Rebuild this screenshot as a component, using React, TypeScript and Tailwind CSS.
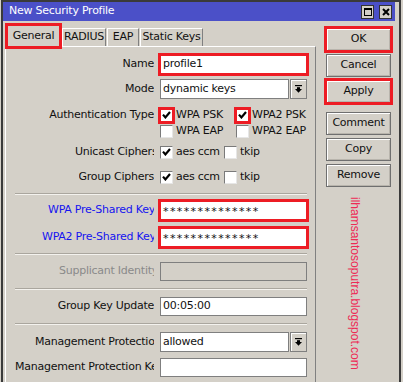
import React from 'react';

const redBox = 'outline-[3px] outline-[#ed1c24] -outline-offset-1';

function Check({ checked, red }: { checked?: boolean; red?: boolean }) {
  return (
    <span
      className={`flex h-[13px] w-[13px] shrink-0 items-center justify-center border border-t-[#7a7a7a] border-l-[#7a7a7a] border-r-[#e6e6e6] border-b-[#e6e6e6] bg-white ${red ? redBox : ''}`}
    >
      {checked && (
        <svg width="9" height="8" viewBox="0 0 9 8">
          <path d="M1 3.6 L3.4 6.4 L8 1" stroke="#000" strokeWidth="2.2" fill="none" />
        </svg>
      )}
    </span>
  );
}

function Option({ label, checked, red, w }: { label: string; checked?: boolean; red?: boolean; w: string }) {
  return (
    <div className={`flex items-center ${w}`}>
      <Check checked={checked} red={red} />
      <span className="ml-[3px] whitespace-nowrap">{label}</span>
    </div>
  );
}

function Row({
  label,
  clip = '',
  tone = 'text-[#111]',
  className,
  children,
}: {
  label: string;
  clip?: string;
  tone?: string;
  className: string;
  children: React.ReactNode;
}) {
  return (
    <div className={`flex items-center ${className}`}>
      <div className="ml-[9px] flex w-[140px] justify-end pr-[1px]">
        <span className={`block overflow-hidden whitespace-nowrap ${clip} ${tone}`}>{label}</span>
      </div>
      <div className="ml-[5px] flex items-center">{children}</div>
    </div>
  );
}

function Input({ value, red, disabled, stars }: { value?: string; red?: boolean; disabled?: boolean; stars?: boolean }) {
  return (
    <div
      className={`flex h-[19px] w-[147px] items-center overflow-hidden border border-[#7f7f7f] px-[2px] ${disabled ? 'bg-[#d4d0c8]' : 'bg-white'} ${red ? redBox : ''} ${stars ? 'pt-[3px] tracking-[1.4px]' : ''}`}
    >
      {value}
    </div>
  );
}

function Select({ value }: { value: string }) {
  return (
    <div className="flex h-[20px] items-center">
      <div className="flex h-[20px] w-[129px] items-center border border-[#7f7f7f] bg-white px-[2px]">{value}</div>
      <div className="ml-[1px] flex h-[20px] w-[17px] items-center justify-center border border-[#7f7f7f] bg-[#d4d0c8] shadow-[inset_1px_1px_0_#fff]">
        <svg width="7" height="8" viewBox="0 0 7 8">
          <rect x="0" y="0" width="7" height="1.2" fill="#000" />
          <rect x="2" y="2.2" width="3" height="2" fill="#000" />
          <polygon points="0,4 7,4 3.5,7.8" fill="#000" />
        </svg>
      </div>
    </div>
  );
}

function Sep({ className }: { className: string }) {
  return <div className={`ml-[9px] h-[2px] w-[292px] border-t border-b border-t-[#aaa69e] border-b-[#f4f2ee] ${className}`} />;
}

function Btn({ label, red, className = '' }: { label: string; red?: boolean; className?: string }) {
  return (
    <div
      className={`flex h-[23px] w-[65px] items-center justify-center border border-[#6f6f6f] bg-[#d4d0c8] text-[#111] shadow-[inset_1px_1px_0_#fff,inset_-1px_-1px_0_#b8b4ac] ${red ? redBox : ''} ${className}`}
    >
      {label}
    </div>
  );
}

export default function App() {
  return (
    <div className="flex h-[382px] w-[403px] overflow-hidden bg-[#d4d0c8] font-['DejaVu_Sans',sans-serif] text-[11px] tracking-[-0.25px] text-[#111]">
      <div className="ml-[1px] flex h-[400px] w-[400px] flex-col border-t-2 border-l-2 border-r-2 border-[#3a3a3a]">
        {/* title bar */}
        <div className="mr-[4px] flex h-[19px] items-center bg-[#4b50c8] pl-[6px] text-white">
          <span>New Security Profile</span>
          <div className="ml-auto flex gap-[5px] pr-[3px]">
            <div className="flex h-[14px] w-[13px] items-center justify-center border border-[#333] bg-[#d4d0c8]">
              <div className="h-[8px] w-[8px] border border-t-2 border-[#000]" />
            </div>
            <div className="flex h-[14px] w-[13px] items-center justify-center border border-[#333] bg-[#d4d0c8]">
              <svg width="8" height="8" viewBox="0 0 8 8">
                <path d="M1 1 L7 7 M7 1 L1 7" stroke="#000" strokeWidth="2" />
              </svg>
            </div>
          </div>
        </div>

        {/* body */}
        <div className="flex flex-1">
          <div className="ml-[2px] flex w-[311px] flex-col">
            {/* tabs */}
            <div className="flex h-[25px] items-end">
              <div className={`relative z-10 -mb-[1px] ml-[2px] flex h-[22px] w-[53px] items-center justify-center border-t border-l border-r border-t-white border-l-white border-r-[#808080] bg-[#d4d0c8] ${redBox}`}>
                General
              </div>
              <div className="ml-[2px] flex h-[18px] w-[44px] items-center justify-center border-t border-l border-r border-t-white border-l-white border-r-[#808080]">
                RADIUS
              </div>
              <div className="ml-[1px] flex h-[18px] w-[32px] items-center justify-center border-t border-l border-r border-t-white border-l-white border-r-[#808080]">
                EAP
              </div>
              <div className="ml-[1px] flex h-[18px] w-[63px] items-center justify-center border-t border-l border-r border-t-white border-l-white border-r-[#808080]">
                Static Keys
              </div>
            </div>

            {/* panel */}
            <div className="flex flex-1 flex-col border-t border-l border-r border-t-white border-l-white border-r-[#808080]">
              <Row label="Name" className="mt-[7px] h-[21px]">
                <Input value="profile1" red />
              </Row>
              <Row label="Mode" className="mt-[4px] h-[20px]">
                <Select value="dynamic keys" />
              </Row>
              <Row label="Authentication Type" className="mt-[8px] h-[16px]">
                <Option label="WPA PSK" checked red w="w-[76px]" />
                <Option label="WPA2 PSK" checked red w="w-[76px]" />
              </Row>
              <Row label="" className="h-[16px]">
                <Option label="WPA EAP" w="w-[76px]" />
                <Option label="WPA2 EAP" w="w-[76px]" />
              </Row>
              <Row label="Unicast Ciphers" clip="max-w-[79px]" className="mt-[5px] h-[16px]">
                <Option label="aes ccm" checked w="w-[64px]" />
                <Option label="tkip" w="w-[40px]" />
              </Row>
              <Row label="Group Ciphers" className="mt-[9px] h-[16px]">
                <Option label="aes ccm" checked w="w-[64px]" />
                <Option label="tkip" w="w-[40px]" />
              </Row>
              <Sep className="mt-[8px]" />
              <Row label="WPA Pre-Shared Key" clip="max-w-[106px]" tone="text-[#1414f0]" className="mt-[5px] h-[21px]">
                <Input value="**************" red stars />
              </Row>
              <Row label="WPA2 Pre-Shared Key" clip="max-w-[112px]" tone="text-[#1414f0]" className="mt-[6px] h-[21px]">
                <Input value="**************" red stars />
              </Row>
              <Sep className="mt-[5px]" />
              <Row label="Supplicant Identity" clip="max-w-[95px]" tone="text-[#8a8a8a]" className="mt-[7px] h-[19px]">
                <Input disabled />
              </Row>
              <Sep className="mt-[7px]" />
              <Row label="Group Key Update" className="mt-[7px] h-[19px]">
                <Input value="00:05:00" />
              </Row>
              <Sep className="mt-[7px]" />
              <Row label="Management Protection" clip="max-w-[119px]" className="mt-[7px] h-[20px]">
                <Select value="allowed" />
              </Row>
              <Row label="Management Protection Key" clip="max-w-[139px]" className="mt-[6px] h-[19px]">
                <Input />
              </Row>
            </div>
          </div>

          {/* buttons */}
          <div className="ml-[10px] flex flex-col items-start pt-[7px]">
            <Btn label="OK" red />
            <Btn label="Cancel" className="mt-[3px]" />
            <Btn label="Apply" red className="mt-[3px]" />
            <Btn label="Comment" className="mt-[9px]" />
            <Btn label="Copy" className="mt-[3px]" />
            <Btn label="Remove" className="mt-[3px]" />
            <div className="ml-[20px] mt-[10px] font-['Liberation_Sans',sans-serif] text-[12px] tracking-normal text-[#ee2a55] [writing-mode:vertical-rl]">
              ilhamsantosoputra.blogspot.com
            </div>
          </div>
        </div>
      </div>
    </div>
  );
}
